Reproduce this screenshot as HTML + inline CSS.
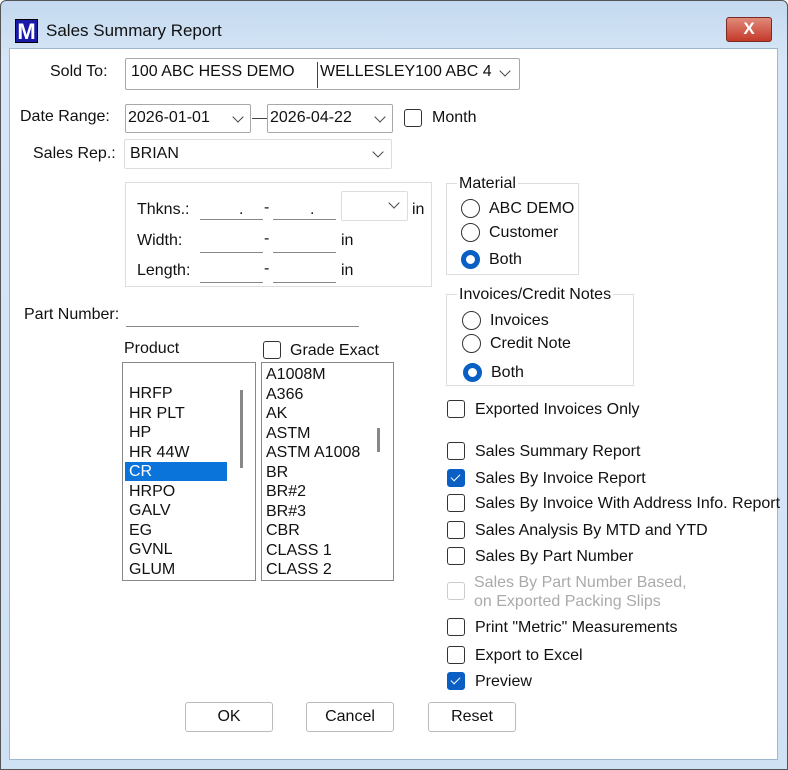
<!DOCTYPE html>
<html><head><style>
*{box-sizing:border-box;margin:0;padding:0}
body{width:788px;height:770px;overflow:hidden;background:#fff;font-family:"Liberation Sans",sans-serif;font-size:16px;color:#111;position:relative}
.frame{position:absolute;left:0;top:0;width:788px;height:770px;background:linear-gradient(#c4d9ef,#d6e6f6 60px,#cfe2f4);border:1px solid #555;border-radius:6px 6px 0 0}
.client{position:absolute;left:9px;top:48px;width:769px;height:712px;background:#fff;border:1px solid #9fb7d1}
.a{position:absolute;white-space:nowrap}
.box{position:absolute;border:1px solid #a8a8a8;background:#fff;border-radius:2px}
.chev{position:absolute;width:8px;height:8px;border-right:1.3px solid #444;border-bottom:1.3px solid #444;transform:rotate(45deg)}
.cb{position:absolute;width:18px;height:18px;border:1.5px solid #333;border-radius:3px;background:#fff}
.cb.on{background:#0a5fc4;border-color:#0a5fc4}
.cb.on:after{content:"";position:absolute;left:5px;top:2px;width:4px;height:8px;border-right:1.5px solid #fff;border-bottom:1.5px solid #fff;transform:rotate(45deg)}
.cb.dis{border-color:#ccc}
.rb{position:absolute;width:19px;height:19px;border:1.5px solid #333;border-radius:50%;background:#fff}
.rb.on{border:5px solid #0a5fc4}
.ul{position:absolute;border-bottom:1px solid #888;height:1px}
.grp{position:absolute;border:1px solid #ddd}
.btn{position:absolute;border:1px solid #bbb;border-radius:3px;background:#fff;text-align:center;line-height:28px;height:30px}
.li{position:absolute;line-height:19.5px}
</style></head><body>
<div class="frame"></div>
<div class="a" style="left:15px;top:19px;width:23px;height:24px;background:#1a1aa8;color:#fff;font-weight:bold;font-size:22px;line-height:24px;text-align:center;border:1px solid #000">M</div>
<div class="a" style="left:46px;top:21px;font-size:17px">Sales Summary Report</div>
<div class="a" style="left:726px;top:17px;width:46px;height:25px;background:linear-gradient(#e08a7a,#c4392a);border:1px solid #7a2a20;border-radius:3px;color:#fff;font-weight:bold;text-align:center;line-height:22px;font-size:17px">X</div>
<div class="client"></div>

<div class="a" style="left:50px;top:63px">Sold To:</div>
<div class="box" style="left:125px;top:58px;width:395px;height:32px"></div>
<div class="a" style="left:131px;top:63px">100 ABC HESS DEMO</div>
<div class="a" style="left:317px;top:62px;width:1px;height:26px;background:#444"></div>
<div class="a" style="left:320px;top:63px">WELLESLEY100 ABC 4</div>
<div class="chev" style="left:501px;top:67px"></div>

<div class="a" style="left:20px;top:108px">Date Range:</div>
<div class="box" style="left:125px;top:104px;width:126px;height:29px"></div>
<div class="a" style="left:128px;top:109px">2026-01-01</div>
<div class="chev" style="left:234px;top:113px"></div>
<div class="a" style="left:252px;top:118px;width:15px;height:1px;background:#444"></div>
<div class="box" style="left:267px;top:104px;width:126px;height:29px"></div>
<div class="a" style="left:270px;top:109px">2026-04-22</div>
<div class="chev" style="left:376px;top:113px"></div>
<div class="cb" style="left:404px;top:109px"></div>
<div class="a" style="left:432px;top:109px">Month</div>

<div class="a" style="left:33px;top:145px">Sales Rep.:</div>
<div class="box" style="left:124px;top:139px;width:268px;height:30px;border-color:#ddd"></div>
<div class="a" style="left:130px;top:145px">BRIAN</div>
<div class="chev" style="left:374px;top:148px"></div>

<div class="grp" style="left:125px;top:182px;width:307px;height:105px"></div>
<div class="a" style="left:137px;top:201px">Thkns.:</div>
<div class="ul" style="left:200px;top:219px;width:63px"></div><div class="a" style="left:239px;top:201px">.</div>
<div class="a" style="left:264px;top:199px">-</div>
<div class="ul" style="left:273px;top:219px;width:63px"></div><div class="a" style="left:310px;top:201px">.</div>
<div class="box" style="left:341px;top:191px;width:67px;height:30px;border-color:#ddd"></div>
<div class="chev" style="left:390px;top:199px"></div>
<div class="a" style="left:412px;top:201px">in</div>
<div class="a" style="left:137px;top:232px">Width:</div>
<div class="ul" style="left:200px;top:252px;width:63px"></div>
<div class="a" style="left:264px;top:230px">-</div>
<div class="ul" style="left:273px;top:252px;width:63px"></div>
<div class="a" style="left:341px;top:232px">in</div>
<div class="a" style="left:137px;top:262px">Length:</div>
<div class="ul" style="left:200px;top:282px;width:63px"></div>
<div class="a" style="left:264px;top:260px">-</div>
<div class="ul" style="left:273px;top:282px;width:63px"></div>
<div class="a" style="left:341px;top:262px">in</div>

<div class="grp" style="left:446px;top:183px;width:133px;height:92px"></div>
<div class="a" style="left:457px;top:175px;background:#fff;padding:0 2px">Material</div>
<div class="rb" style="left:461px;top:199px"></div><div class="a" style="left:489px;top:200px">ABC DEMO</div>
<div class="rb" style="left:461px;top:223px"></div><div class="a" style="left:489px;top:224px">Customer</div>
<div class="rb on" style="left:461px;top:250px"></div><div class="a" style="left:489px;top:251px">Both</div>

<div class="grp" style="left:446px;top:294px;width:188px;height:92px"></div>
<div class="a" style="left:457px;top:286px;background:#fff;padding:0 2px">Invoices/Credit Notes</div>
<div class="rb" style="left:462px;top:311px"></div><div class="a" style="left:490px;top:312px">Invoices</div>
<div class="rb" style="left:462px;top:334px"></div><div class="a" style="left:490px;top:335px">Credit Note</div>
<div class="rb on" style="left:463px;top:363px"></div><div class="a" style="left:491px;top:364px">Both</div>

<div class="a" style="left:24px;top:306px">Part Number:</div>
<div class="ul" style="left:126px;top:326px;width:233px"></div>

<div class="a" style="left:124px;top:340px">Product</div>
<div class="cb" style="left:263px;top:341px"></div>
<div class="a" style="left:290px;top:342px">Grade Exact</div>

<div class="box" style="left:122px;top:362px;width:134px;height:219px;border-color:#888;border-radius:0"></div>
<div class="a" style="left:240px;top:390px;width:3px;height:78px;background:#888"></div>
<div class="a" style="left:125px;top:462px;width:102px;height:19px;background:#0a74da"></div>
<div class="li" style="left:129px;top:384px">HRFP<br>HR PLT<br>HP<br>HR 44W<br><span style="color:#fff">CR</span><br>HRPO<br>GALV<br>EG<br>GVNL<br>GLUM</div>

<div class="box" style="left:261px;top:362px;width:133px;height:219px;border-color:#888;border-radius:0"></div>
<div class="a" style="left:377px;top:428px;width:3px;height:24px;background:#888"></div>
<div class="li" style="left:266px;top:365px">A1008M<br>A366<br>AK<br>ASTM<br>ASTM A1008<br>BR<br>BR#2<br>BR#3<br>CBR<br>CLASS 1<br>CLASS 2</div>

<div class="cb" style="left:447px;top:400px"></div><div class="a" style="left:475px;top:401px">Exported Invoices Only</div>
<div class="cb" style="left:447px;top:442px"></div><div class="a" style="left:475px;top:443px">Sales Summary Report</div>
<div class="cb on" style="left:447px;top:469px"></div><div class="a" style="left:475px;top:470px">Sales By Invoice Report</div>
<div class="cb" style="left:447px;top:494px"></div><div class="a" style="left:475px;top:495px">Sales By Invoice With Address Info. Report</div>
<div class="cb" style="left:447px;top:521px"></div><div class="a" style="left:475px;top:522px">Sales Analysis By MTD and YTD</div>
<div class="cb" style="left:447px;top:547px"></div><div class="a" style="left:475px;top:548px">Sales By Part Number</div>
<div class="cb dis" style="left:447px;top:582px"></div><div class="a" style="left:474px;top:573px;color:#aaa;line-height:19px">Sales By Part Number Based,<br>on Exported Packing Slips</div>
<div class="cb" style="left:447px;top:618px"></div><div class="a" style="left:475px;top:619px">Print "Metric" Measurements</div>
<div class="cb" style="left:447px;top:646px"></div><div class="a" style="left:475px;top:647px">Export to Excel</div>
<div class="cb on" style="left:447px;top:672px"></div><div class="a" style="left:475px;top:673px">Preview</div>

<div class="btn" style="left:185px;top:702px;width:88px">OK</div>
<div class="btn" style="left:306px;top:702px;width:88px">Cancel</div>
<div class="btn" style="left:428px;top:702px;width:88px">Reset</div>
</body></html>
